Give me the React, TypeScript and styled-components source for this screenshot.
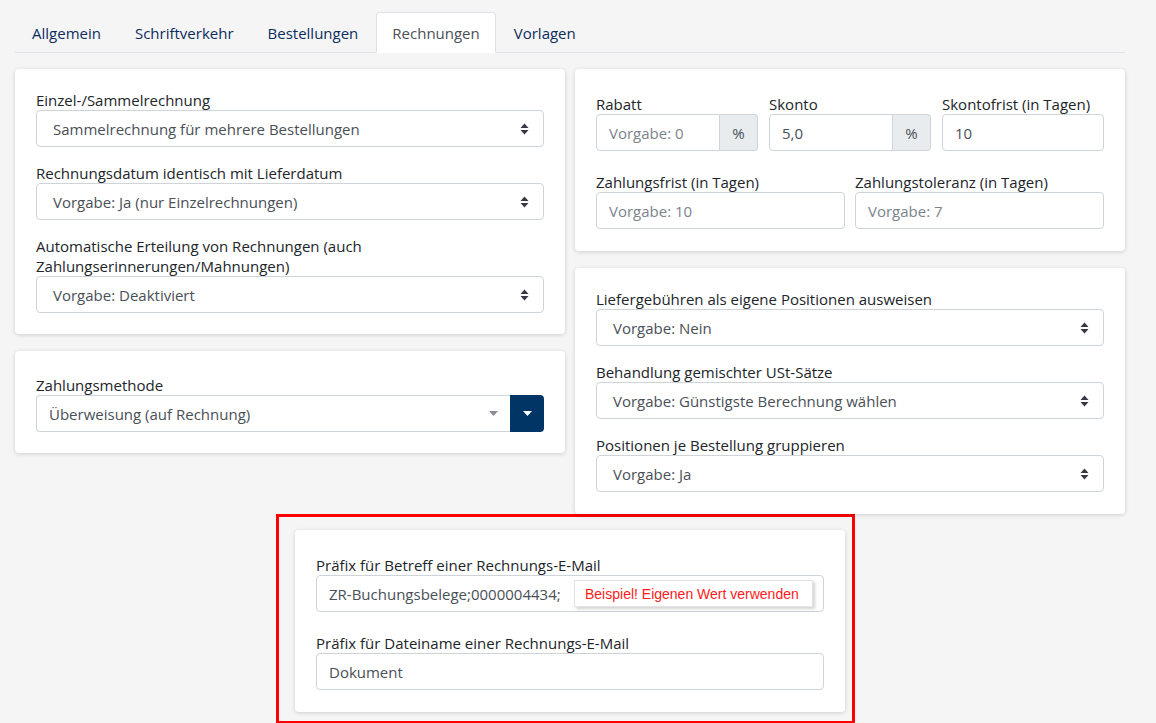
import React from "react";
import styled, { createGlobalStyle } from "styled-components";

const GlobalStyle = createGlobalStyle`
  html, body {
    margin: 0;
    padding: 0;
    background: #f5f5f5;
  }
  body {
    font-family: "Open Sans", "Noto Sans", sans-serif;
    font-size: 15px;
    color: #212529;
  }
  * {
    box-sizing: border-box;
  }
`;

const Page = styled.div`
  width: 1156px;
  height: 723px;
  overflow: hidden;
  padding: 12px 31px 0 15px;
`;

const TabNav = styled.nav`
  display: flex;
  padding-left: 1px;
  border-bottom: 1px solid #dee2e6;
  height: 41px;
`;

const Tab = styled.div<{ $active?: boolean }>`
  height: 41px;
  padding: 0 15px;
  margin-right: 2px;
  display: flex;
  align-items: center;
  border: 1px solid ${(p) => (p.$active ? "#dee2e6" : "transparent")};
  border-bottom-color: ${(p) => (p.$active ? "#ffffff" : "transparent")};
  border-radius: 4px 4px 0 0;
  background: ${(p) => (p.$active ? "#ffffff" : "transparent")};
  color: ${(p) => (p.$active ? "#495057" : "#0c2d5e")};
  cursor: pointer;
`;

const Columns = styled.div`
  display: grid;
  grid-template-columns: 550px 550px;
  column-gap: 10px;
  align-items: start;
  margin-top: 16px;
`;

const Column = styled.div`
  display: flex;
  flex-direction: column;
  gap: 17px;
`;

const Card = styled.div<{ $top?: number; $bottom?: number }>`
  background: #ffffff;
  border-radius: 4px;
  box-shadow: 0 1px 4px rgba(0, 0, 0, 0.16);
  padding: ${(p) => p.$top ?? 21}px 21px ${(p) => p.$bottom ?? 21}px;
  display: flex;
  flex-direction: column;
  gap: 16px;
`;

const Field = styled.div`
  display: flex;
  flex-direction: column;
  min-width: 0;
`;

const Label = styled.label`
  font-size: 15px;
  line-height: 20px;
  color: #212529;
`;

const SelectBox = styled.div`
  flex-shrink: 0;
  height: 37px;
  border: 1px solid #ced4da;
  border-radius: 4px;
  background: #ffffff;
  padding: 0 14px 0 16px;
  display: flex;
  align-items: center;
  justify-content: space-between;
  color: #495057;
`;

const InputBox = styled.div<{ $placeholder?: boolean }>`
  position: relative;
  flex-shrink: 0;
  min-width: 0;
  height: 37px;
  border: 1px solid #ced4da;
  border-radius: 4px;
  background: #ffffff;
  padding: 0 12px;
  display: flex;
  align-items: center;
  color: ${(p) => (p.$placeholder ? "#7b848c" : "#495057")};
  white-space: nowrap;
`;

const InputGroup = styled.div`
  display: flex;

  ${InputBox} {
    flex: 1 1 auto;
    border-radius: 4px 0 0 4px;
  }
`;

const Addon = styled.div`
  flex-shrink: 0;
  width: 38px;
  height: 37px;
  border: 1px solid #ced4da;
  border-left: none;
  border-radius: 0 4px 4px 0;
  background: #e9ecef;
  color: #495057;
  display: flex;
  align-items: center;
  justify-content: center;
`;

const Grid = styled.div<{ $cols: number; $gap: number }>`
  display: grid;
  grid-template-columns: repeat(${(p) => p.$cols}, 1fr);
  column-gap: ${(p) => p.$gap}px;
`;

const Rows = styled.div`
  display: flex;
  flex-direction: column;
  gap: 21px;
`;

const ComboRow = styled.div`
  display: flex;
`;

const ComboSelect = styled(SelectBox)`
  flex: 1;
  border-radius: 4px 0 0 4px;
  border-right: none;
  padding: 0 12px;
`;

const ComboButton = styled.div`
  width: 34px;
  height: 37px;
  background: #003566;
  border-radius: 0 4px 4px 0;
  display: flex;
  align-items: center;
  justify-content: center;
`;

const Highlight = styled.div`
  width: 579px;
  margin-left: 261px;
  border: 3px solid #ff0000;
  padding: 13px 7px 9px 16px;
`;

const BottomCard = styled(Card)`
  gap: 21px;
`;

const Hint = styled.div`
  position: absolute;
  left: 257px;
  top: 4px;
  height: 27px;
  padding: 0 13px 0 10px;
  display: flex;
  align-items: center;
  background: #ffffff;
  border: 1px solid #e3e3e3;
  box-shadow: 2px 2px 3px rgba(0, 0, 0, 0.18);
  color: #ff1a1a;
  font-family: "Liberation Sans", Arial, sans-serif;
  font-size: 14px;
`;

const SortIcon = () => (
  <svg width="9" height="12" viewBox="0 0 9 12">
    <path d="M4.5 0.5 L8.5 5 L0.5 5 Z" fill="#343a40" />
    <path d="M4.5 11.5 L8.5 7 L0.5 7 Z" fill="#343a40" />
  </svg>
);

const Caret = ({ color }: { color: string }) => (
  <svg width="9" height="5" viewBox="0 0 9 5">
    <path d="M0 0 L9 0 L4.5 5 Z" fill={color} />
  </svg>
);

const Select = ({ label, value }: { label: React.ReactNode; value: string }) => (
  <Field>
    <Label>{label}</Label>
    <SelectBox>
      <span>{value}</span>
      <SortIcon />
    </SelectBox>
  </Field>
);

const Input = ({
  label,
  value,
  placeholder,
  addon,
}: {
  label: string;
  value?: string;
  placeholder?: string;
  addon?: string;
}) => {
  const box = <InputBox $placeholder={!value}>{value || placeholder}</InputBox>;
  return (
    <Field>
      <Label>{label}</Label>
      {addon ? (
        <InputGroup>
          {box}
          <Addon>{addon}</Addon>
        </InputGroup>
      ) : (
        box
      )}
    </Field>
  );
};

const tabs = ["Allgemein", "Schriftverkehr", "Bestellungen", "Rechnungen", "Vorlagen"];

export default function App() {
  return (
    <>
      <GlobalStyle />
      <Page>
        <TabNav>
          {tabs.map((t) => (
            <Tab key={t} $active={t === "Rechnungen"}>
              {t}
            </Tab>
          ))}
        </TabNav>

        <Columns>
          <Column>
            <Card>
              <Select label="Einzel-/Sammelrechnung" value="Sammelrechnung für mehrere Bestellungen" />
              <Select
                label="Rechnungsdatum identisch mit Lieferdatum"
                value="Vorgabe: Ja (nur Einzelrechnungen)"
              />
              <Select
                label={
                  <>
                    Automatische Erteilung von Rechnungen (auch
                    <br />
                    Zahlungserinnerungen/Mahnungen)
                  </>
                }
                value="Vorgabe: Deaktiviert"
              />
            </Card>

            <Card $top={24}>
              <Field>
                <Label>Zahlungsmethode</Label>
                <ComboRow>
                  <ComboSelect>
                    <span>Überweisung (auf Rechnung)</span>
                    <Caret color="#888e94" />
                  </ComboSelect>
                  <ComboButton>
                    <Caret color="#ffffff" />
                  </ComboButton>
                </ComboRow>
              </Field>
            </Card>
          </Column>

          <Column>
            <Card $top={25} $bottom={22}>
              <Rows>
                <Grid $cols={3} $gap={11}>
                  <Input label="Rabatt" placeholder="Vorgabe: 0" addon="%" />
                  <Input label="Skonto" value="5,0" addon="%" />
                  <Input label="Skontofrist (in Tagen)" value="10" />
                </Grid>
                <Grid $cols={2} $gap={10}>
                  <Input label="Zahlungsfrist (in Tagen)" placeholder="Vorgabe: 10" />
                  <Input label="Zahlungstoleranz (in Tagen)" placeholder="Vorgabe: 7" />
                </Grid>
              </Rows>
            </Card>

            <Card $bottom={22}>
              <Select label="Liefergebühren als eigene Positionen ausweisen" value="Vorgabe: Nein" />
              <Select
                label="Behandlung gemischter USt-Sätze"
                value="Vorgabe: Günstigste Berechnung wählen"
              />
              <Select label="Positionen je Bestellung gruppieren" value="Vorgabe: Ja" />
            </Card>
          </Column>
        </Columns>

        <Highlight>
          <BottomCard $top={25} $bottom={22}>
            <Field>
              <Label>Präfix für Betreff einer Rechnungs-E-Mail</Label>
              <InputBox>
                ZR-Buchungsbelege;0000004434;
                <Hint>Beispiel! Eigenen Wert verwenden</Hint>
              </InputBox>
            </Field>
            <Field>
              <Label>Präfix für Dateiname einer Rechnungs-E-Mail</Label>
              <InputBox>Dokument</InputBox>
            </Field>
          </BottomCard>
        </Highlight>
      </Page>
    </>
  );
}
